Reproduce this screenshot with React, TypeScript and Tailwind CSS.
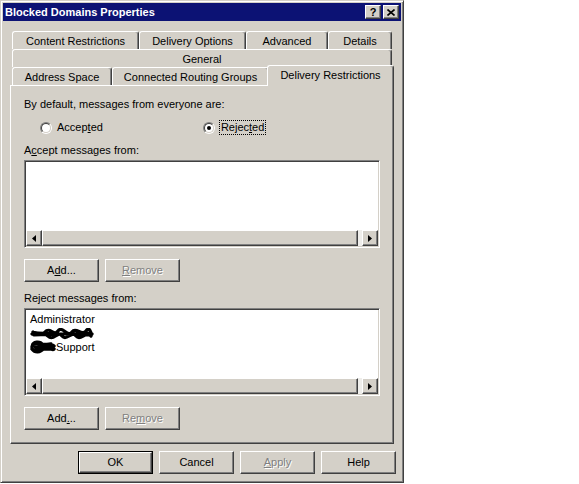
import React from 'react'

const raised =
  'border border-t-white border-l-white border-r-[#404040] border-b-[#404040] shadow-[inset_-1px_-1px_#808080]'
const sunken =
  'border border-t-[#808080] border-l-[#808080] border-r-white border-b-white shadow-[inset_1px_1px_#404040,inset_-1px_-1px_#d4d0c8]'
const disabled = 'text-[#808080] [text-shadow:1px_1px_#ffffff]'

function Btn({ children, off, className = '' }: { children: React.ReactNode; off?: boolean; className?: string }) {
  return (
    <div className={`h-[23px] w-[75px] bg-[#d4d0c8] flex items-center justify-center ${raised} ${off ? disabled : ''} ${className}`}>
      {children}
    </div>
  )
}

function U({ children }: { children: React.ReactNode }) {
  return <span className="underline underline-offset-[1px]">{children}</span>
}

function Tab({ label, w }: { label: string; w: string }) {
  return (
    <div
      className={`${w} h-[18px] border-t border-l border-r border-t-white border-l-white border-r-[#404040] shadow-[inset_-1px_0_#808080] rounded-t-[3px] flex items-center justify-center pt-[1px]`}
    >
      {label}
    </div>
  )
}

function Radio({ on }: { on?: boolean }) {
  return (
    <div className="w-[12px] h-[12px] rounded-full border border-t-[#808080] border-l-[#808080] border-r-white border-b-white flex">
      <div className="flex-1 rounded-full bg-white border border-t-[#404040] border-l-[#404040] border-r-[#d4d0c8] border-b-[#d4d0c8] flex items-center justify-center">
        {on && <div className="w-[4px] h-[4px] rounded-full bg-black" />}
      </div>
    </div>
  )
}

function Arrow({ dir }: { dir: 'l' | 'r' }) {
  return (
    <svg width="4" height="7" viewBox="0 0 4 7">
      {dir === 'l' ? <path d="M4 0 L0 3.5 L4 7 Z" fill="#000" /> : <path d="M0 0 L4 3.5 L0 7 Z" fill="#000" />}
    </svg>
  )
}

function HScroll() {
  return (
    <div className="h-[16px] flex">
      <div className={`w-[16px] h-[16px] bg-[#d4d0c8] flex items-center justify-center ${raised}`}>
        <Arrow dir="l" />
      </div>
      <div className={`flex-1 bg-[#d4d0c8] ${raised}`} />
      <div className="w-[4px] bg-[#efeeeb]" />
      <div className={`w-[16px] h-[16px] bg-[#d4d0c8] flex items-center justify-center ${raised}`}>
        <Arrow dir="r" />
      </div>
    </div>
  )
}

function ListBox({ children }: { children?: React.ReactNode }) {
  return (
    <div className={`h-[88px] bg-white flex flex-col p-[1px] ${sunken}`}>
      <div className="flex-1 pl-[4px] pt-[2px]">{children}</div>
      <HScroll />
    </div>
  )
}

// redaction scribbles drawn over two of the names
function Scribble({ big }: { big?: boolean }) {
  if (big) {
    return (
      <svg width="64" height="12" viewBox="0 0 64 12" className="shrink-0">
        <path
          d="M2 6 C6 1 10 10 15 4 S24 9 28 3 S38 10 42 4 S52 9 56 3 S61 7 62 6 M3 4 C8 10 12 2 18 8 S27 2 32 8 S41 2 46 8 S55 2 61 8 M4 7 L59 5 M8 5 L60 7"
          stroke="#000"
          strokeWidth={3.2}
          fill="none"
          strokeLinecap="round"
        />
      </svg>
    )
  }
  return (
    <svg width="26" height="14" viewBox="0 0 26 14" className="shrink-0">
      <path
        d="M2 7 C3 1 10 1 13 5 S21 2 24 6 M2 9 C5 13 10 13 14 8 S21 12 24 9 M3 5 C8 11 14 3 22 8 M4 10 L22 6 M3 4 C8 2 14 6 21 4 M6 8 L20 9"
        stroke="#000"
        strokeWidth={3.4}
        fill="none"
        strokeLinecap="round"
      />
    </svg>
  )
}

export default function App() {
  return (
    <div className="w-[579px] h-[484px] bg-white text-[11px] leading-[13px] text-black font-['Liberation_Sans',Arial,sans-serif]">
      <div className="w-[404px] h-[483px] bg-[#d4d0c8] border border-t-[#d4d0c8] border-l-[#d4d0c8] border-r-[#404040] border-b-[#404040] shadow-[inset_1px_1px_#ffffff,inset_-1px_-1px_#808080] p-[2px] flex flex-col">
        {/* title bar */}
        <div className="h-[18px] bg-[#0c1274] flex items-center pl-[2px] pr-[2px]">
          <span className="flex-1 text-white font-bold text-[11px]">Blocked Domains Properties</span>
          <div className={`w-[16px] h-[14px] bg-[#d4d0c8] flex items-center justify-center font-bold text-[11px] ${raised}`}>?</div>
          <div className={`ml-[2px] w-[16px] h-[14px] bg-[#d4d0c8] flex items-center justify-center ${raised}`}>
            <svg width="8" height="7" viewBox="0 0 8 7">
              <path d="M0.5 0.5 L7.5 6.5 M7.5 0.5 L0.5 6.5" stroke="#000" strokeWidth="1.6" />
            </svg>
          </div>
        </div>

        {/* tabs + panel */}
        <div className="mt-[10px] px-[7px] flex flex-col">
          <div className="ml-[2px] w-[380px] flex">
            <Tab label="Content Restrictions" w="w-[127px]" />
            <Tab label="Delivery Options" w="w-[107px]" />
            <Tab label="Advanced" w="w-[82px]" />
            <Tab label="Details" w="w-[64px]" />
          </div>
          <div className="ml-[2px] w-[380px] flex">
            <Tab label="General" w="w-[380px]" />
          </div>
          <div className="-mt-[2px] ml-[2px] w-[380px] h-[20px] flex items-end">
            <Tab label="Address Space" w="w-[100px]" />
            <Tab label="Connected Routing Groups" w="w-[157px]" />
            <div className="relative z-10 -ml-[2px] -mr-[2px] mb-[-1px] w-[127px] h-[21px] bg-[#d4d0c8] border-t border-l border-r border-t-white border-l-white border-r-[#404040] shadow-[inset_-1px_0_#808080] rounded-t-[3px] flex justify-center pt-[3px]">
              Delivery Restrictions
            </div>
          </div>

          <div className="h-[359px] px-[13px] flex flex-col border border-t-white border-l-white border-r-[#404040] border-b-[#404040] shadow-[inset_-1px_-1px_#808080]">
            <div className="mt-[12px]">By default, messages from everyone are:</div>
            <div className="mt-[9px] h-[15px] flex items-center">
              <div className="ml-[16px]">
                <Radio />
              </div>
              <span className="ml-[5px]">
                Accep<U>t</U>ed
              </span>
              <div className="ml-[100px]">
                <Radio on />
              </div>
              <span className="ml-[4px] h-[15px] px-[1px] border border-dotted border-black flex items-center">
                Rejec<U>t</U>ed
              </span>
            </div>
            <div className="mt-[9px]">
              A<U>c</U>cept messages from:
            </div>
            <div className="mt-[3px]">
              <ListBox />
            </div>
            <div className="mt-[11px] flex gap-[6px]">
              <Btn>
                A<U>d</U>d...
              </Btn>
              <Btn off>
                <U>R</U>emove
              </Btn>
            </div>
            <div className="mt-[10px]">Reject messages from:</div>
            <div className="mt-[3px]">
              <ListBox>
                <div className="h-[14px] flex items-center">Administrator</div>
                <div className="h-[14px] flex items-center pt-[1px]">
                  <Scribble big />
                </div>
                <div className="h-[14px] flex items-center">
                  <Scribble />
                  <span>Support</span>
                </div>
              </ListBox>
            </div>
            <div className="mt-[11px] flex gap-[6px]">
              <Btn>
                Add<U>.</U>..
              </Btn>
              <Btn off>
                Re<U>m</U>ove
              </Btn>
            </div>
          </div>
        </div>

        {/* dialog buttons */}
        <div className="mt-[7px] pr-[5px] flex justify-end gap-[6px]">
          <div className="w-[75px] h-[23px] border border-black flex">
            <div className={`flex-1 bg-[#d4d0c8] flex items-center justify-center ${raised}`}>OK</div>
          </div>
          <Btn>Cancel</Btn>
          <Btn off>
            <U>A</U>pply
          </Btn>
          <Btn>Help</Btn>
        </div>
      </div>
    </div>
  )
}
